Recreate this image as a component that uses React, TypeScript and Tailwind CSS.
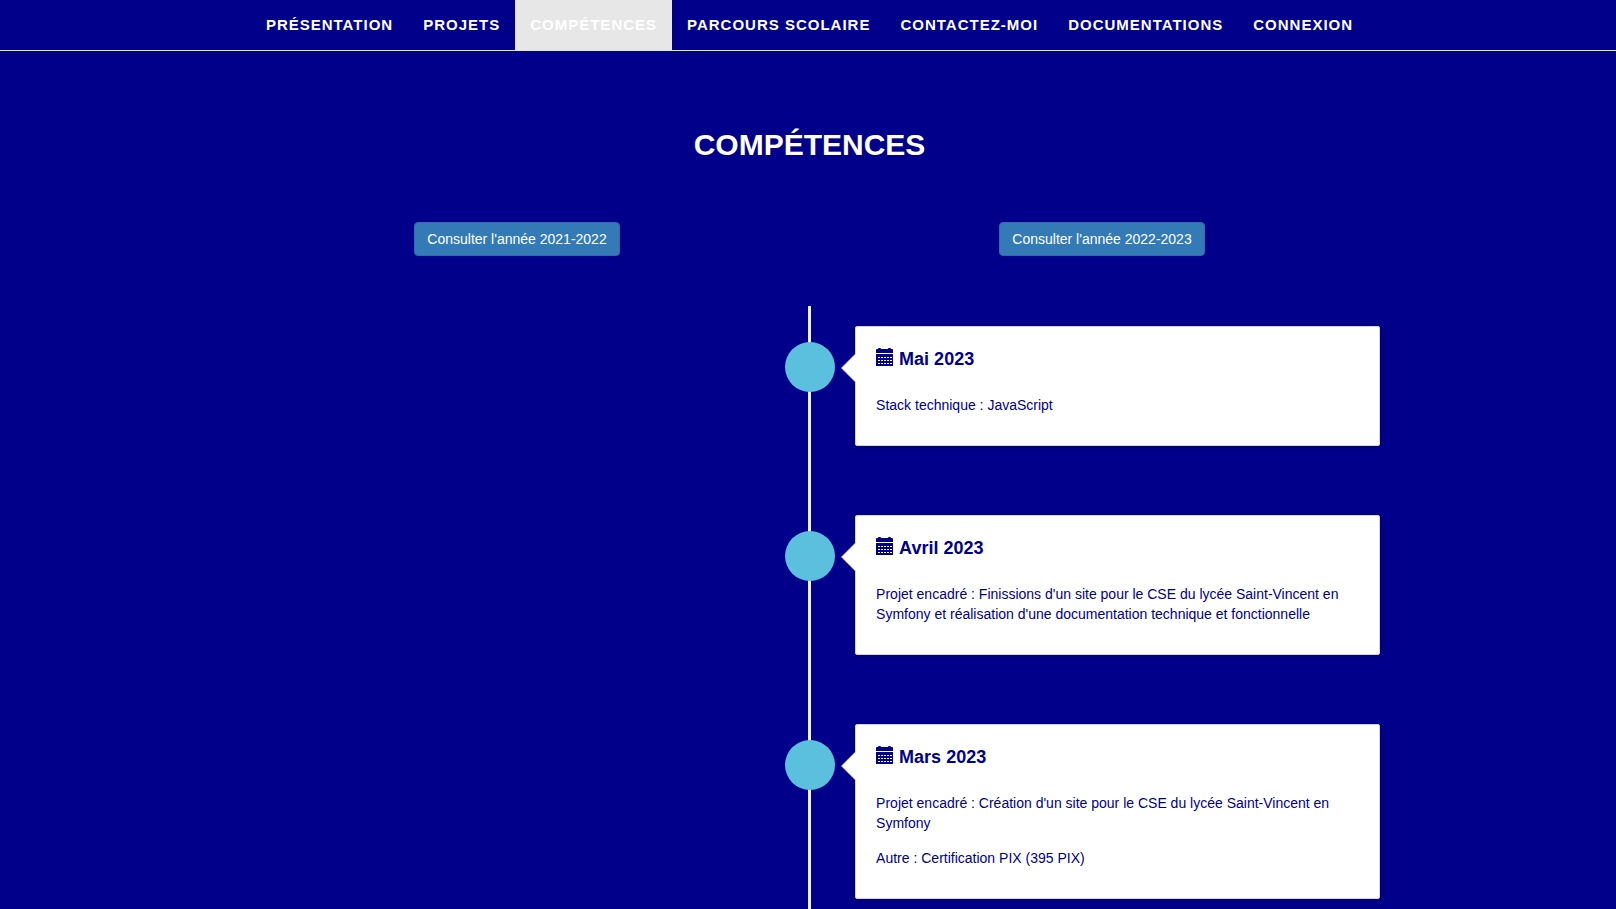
import React from "react";

const navLinks = [
  "Présentation",
  "Projets",
  "Compétences",
  "Parcours scolaire",
  "Contactez-moi",
  "Documentations",
  "Connexion",
];

const years = ["2021-2022", "2022-2023"];

const events = [
  {
    title: "Mai 2023",
    body: ["Stack technique : JavaScript"],
  },
  {
    title: "Avril 2023",
    body: [
      "Projet encadré : Finissions d'un site pour le CSE du lycée Saint-Vincent en Symfony et réalisation d'une documentation technique et fonctionnelle",
    ],
  },
  {
    title: "Mars 2023",
    body: [
      "Projet encadré : Création d'un site pour le CSE du lycée Saint-Vincent en Symfony",
      "Autre : Certification PIX (395 PIX)",
    ],
  },
];

const CalendarIcon = () => (
  <svg
    className="mt-px size-[18px] shrink-0"
    viewBox="0 0 18 18"
    fill="currentColor"
    aria-hidden="true"
  >
    <path d="M0 5V2q0-1 1-1h1q0-1 1-1h1q1 0 1 1h7q0-1 1-1h1q1 0 1 1h1q1 0 1 1v3z" />
    <path
      fillRule="evenodd"
      d="M0 6h17v12H0zM2 9v1h2V9zM5 9v1h2V9zM8 9v1h2V9zM11 9v1h2V9zM14 9v1h2V9zM2 12v1h2v-1zM5 12v1h2v-1zM8 12v1h2v-1zM11 12v1h2v-1zM14 12v1h2v-1zM2 15v1h2v-1zM5 15v1h2v-1zM8 15v1h2v-1zM11 15v1h2v-1zM14 15v1h2v-1z"
    />
  </svg>
);

const TimelineItem = ({ title, body }: { title: string; body: string[] }) => (
  <li className="relative flex justify-end">
    <span className="absolute left-1/2 top-4 -ml-[25px] size-[50px] rounded-full bg-[#5bc0de]" />
    <article className="relative w-[46%] rounded-[2px] border border-[#d4d4d4] bg-white px-5 pt-5 pb-[30px] text-[#00008b] shadow-[0_1px_6px_rgba(0,0,0,0.175)]">
      <span className="absolute top-[26px] -left-[15px] border-y-[15px] border-r-[15px] border-y-transparent border-r-[#cccccc]" />
      <span className="absolute top-[27px] -left-[14px] border-y-[14px] border-r-[14px] border-y-transparent border-r-white" />
      <h2 className="mb-6 flex items-start gap-[5px] text-[18px] leading-6 font-bold">
        <CalendarIcon />
        {title}
      </h2>
      <div className="flex flex-col gap-[15px] text-sm leading-5">
        {body.map((text) => (
          <p key={text}>{text}</p>
        ))}
      </div>
    </article>
  </li>
);

export default function App() {
  return (
    <div className="min-h-screen bg-[#00008b] font-['Liberation_Sans',Arial,sans-serif] text-white">
      <header className="border-b border-[#e7e7e7] pl-[3px]">
        <nav className="flex justify-center">
          {navLinks.map((label) => (
            <a
              key={label}
              href="#"
              className={
                label === "Compétences"
                  ? "bg-[#e7e7e7] p-[15px] text-[15px] leading-5 font-bold tracking-[1px] uppercase"
                  : "p-[15px] text-[15px] leading-5 font-bold tracking-[1px] uppercase"
              }
            >
              {label}
            </a>
          ))}
        </nav>
      </header>

      <main className="pl-[3px]">
        <div className="mx-auto max-w-[1170px]">
          <h1 className="pt-[78px] text-center text-[30px] leading-8 font-bold uppercase">
            Compétences
          </h1>

          <div className="mt-[61px] grid grid-cols-2 justify-items-center">
            {years.map((year) => (
              <button
                key={year}
                type="button"
                className="cursor-pointer rounded-[4px] border border-[#2e6da4] bg-[#337ab7] px-3 py-[6px] text-sm leading-5"
              >
                Consulter l'année {year}
              </button>
            ))}
          </div>

          <div className="mt-[50px] px-[15px]">
            <ul className="relative flex flex-col gap-[69px] py-5">
              <li
                aria-hidden="true"
                className="absolute inset-y-0 left-1/2 -ml-[2px] w-[3px] bg-[#eeeeee]"
              />
              {events.map((event) => (
                <TimelineItem key={event.title} {...event} />
              ))}
            </ul>
          </div>
        </div>
      </main>
    </div>
  );
}
